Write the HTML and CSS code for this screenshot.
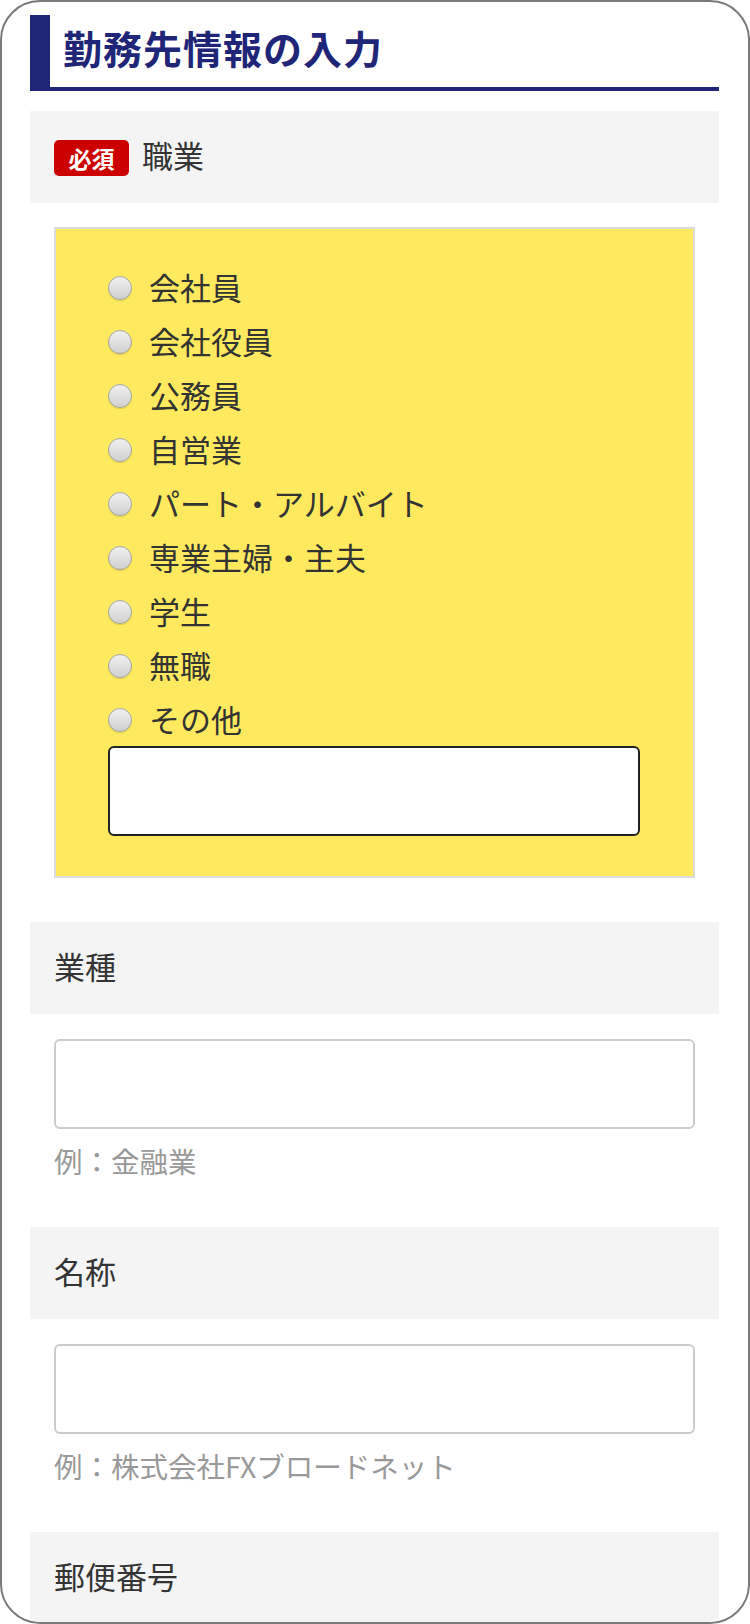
FILE: index.html
```html
<!DOCTYPE html>
<html lang="ja">
<head>
<meta charset="utf-8">
<title>勤務先情報の入力</title>
<link rel="stylesheet" href="styles.css">
</head>
<body>
<div class="frame">
  <h2 class="title">勤務先情報の入力</h2>

  <div class="label"><span class="badge">必須</span>職業</div>
  <div class="choices">
    <label class="choice"><input type="radio" name="job"><span>会社員</span></label>
    <label class="choice"><input type="radio" name="job"><span>会社役員</span></label>
    <label class="choice"><input type="radio" name="job"><span>公務員</span></label>
    <label class="choice"><input type="radio" name="job"><span>自営業</span></label>
    <label class="choice"><input type="radio" name="job"><span>パート・アルバイト</span></label>
    <label class="choice"><input type="radio" name="job"><span>専業主婦・主夫</span></label>
    <label class="choice"><input type="radio" name="job"><span>学生</span></label>
    <label class="choice"><input type="radio" name="job"><span>無職</span></label>
    <label class="choice"><input type="radio" name="job"><span>その他</span></label>
    <input class="other-input" type="text">
  </div>

  <div class="label label-spaced">業種</div>
  <div class="field">
    <input class="text-input" type="text">
    <p class="hint">例：金融業</p>
  </div>

  <div class="label">名称</div>
  <div class="field">
    <input class="text-input" type="text">
    <p class="hint">例：株式会社FXブロードネット</p>
  </div>

  <div class="label">郵便番号</div>
</div>
</body>
</html>
```

FILE: styles.css
```css
html, body {
  margin: 0;
  padding: 0;
  background: #ffffff;
}

body {
  font-family: "Noto Sans CJK JP", "Noto Sans", sans-serif;
  color: #333333;
}

.frame {
  box-sizing: border-box;
  width: 750px;
  height: 1624px;
  border: 2px solid #7a7a7a;
  border-radius: 40px;
  padding: 0 29px 0 28px;
  overflow: hidden;
  background: #ffffff;
}

.title {
  margin: 13px 0 0;
  height: 72px;
  box-sizing: content-box;
  border-left: 20px solid #1f2678;
  border-bottom: 4px solid #1f2678;
  padding: 0 0 0 13px;
  font-size: 39px;
  font-weight: 700;
  line-height: 64px;
  color: #1f2678;
  letter-spacing: 1px;
}

.label {
  margin-top: 20px;
  height: 92px;
  box-sizing: border-box;
  background: #f4f4f4;
  padding: 0 0 6px 24px;
  display: flex;
  align-items: center;
  font-size: 31px;
  color: #333333;
}

.label-spaced {
  margin-top: 44px;
}

.badge {
  display: inline-flex;
  align-items: center;
  justify-content: center;
  width: 75px;
  height: 36px;
  background: #cc0000;
  color: #ffffff;
  border-radius: 5px;
  font-size: 23px;
  font-weight: 700;
  margin-right: 13px;
  margin-top: 8px;
}

.choices {
  margin: 24px 24px 0;
  background: #ffea5f;
  border: 2px solid #dcdcdc;
  padding: 32px 0 40px 52px;
  display: flex;
  flex-direction: column;
}

.choice {
  height: 54px;
  display: flex;
  align-items: center;
  font-size: 31px;
  color: #333333;
}

.choice span {
  margin-top: -3px;
}

.choice input {
  -webkit-appearance: none;
  appearance: none;
  width: 24px;
  height: 24px;
  margin: 0 17px 0 0;
  border-radius: 50%;
  border: 1.5px solid #a4a4a4;
  background: linear-gradient(#f0f0f0, #d0d0d0);
  box-shadow: 0 1px 1px rgba(0, 0, 0, 0.15);
  box-sizing: border-box;
  flex: none;
}

.other-input {
  box-sizing: border-box;
  margin-top: -1px;
  width: 532px;
  height: 90px;
  border: 2px solid #222222;
  border-radius: 6px;
  background: #ffffff;
  padding: 0 12px;
  font-size: 28px;
}

.field {
  padding: 25px 24px 0;
  margin-bottom: 46px;
}

.text-input {
  display: block;
  box-sizing: border-box;
  width: 100%;
  height: 90px;
  border: 2px solid #cccccc;
  border-radius: 6px;
  background: #ffffff;
  padding: 0 12px;
  font-size: 28px;
}

.hint {
  margin: 12px 0 0;
  font-size: 28.5px;
  line-height: 40px;
  color: #999999;
}
```
